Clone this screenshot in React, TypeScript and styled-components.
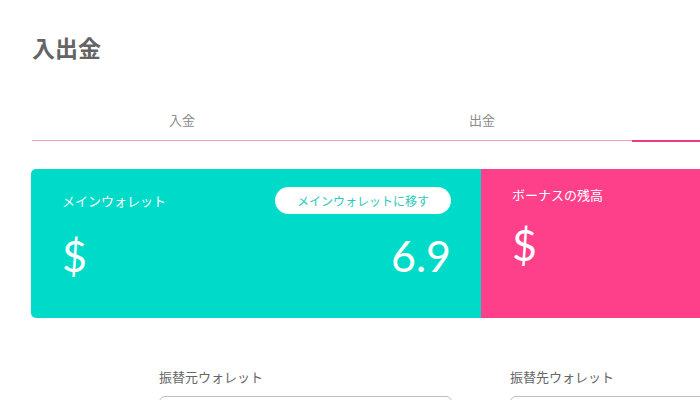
import React from "react";
import styled, { createGlobalStyle } from "styled-components";

const GlobalStyle = createGlobalStyle`
  body {
    margin: 0;
    background: #fff;
    overflow: hidden;
    font-family: "Noto Sans CJK JP", "Noto Sans", sans-serif;
  }
`;

const Page = styled.div`
  width: 900px;
  padding: 31px 0 0 31px;
`;

const Title = styled.h1`
  margin: 0 0 0 1px;
  font-size: 23px;
  line-height: 32px;
  font-weight: 700;
  color: #646464;
`;

const TabBar = styled.div`
  display: flex;
  margin-top: 36px;
  margin-left: 1px;
  border-bottom: 1px solid #f49bc1;
`;

const Tab = styled.div<{ $active?: boolean }>`
  position: relative;
  flex: 0 0 300px;
  height: 18px;
  text-align: center;
  padding: 12px 0 11px;
  font-size: 13px;
  line-height: 18px;
  color: #8a8a8a;

  &::after {
    content: "";
    display: ${(p) => (p.$active ? "block" : "none")};
    position: absolute;
    left: 0;
    right: 0;
    bottom: -2px;
    height: 2px;
    background: #ea3a80;
  }
`;

const Cards = styled.div`
  display: flex;
  margin-top: 28px;
`;

const Card = styled.div<{ $color: string; $first?: boolean }>`
  flex: 0 0 450px;
  box-sizing: border-box;
  height: 149px;
  padding: 18px 30px 0 31px;
  background: ${(p) => p.$color};
  color: #fff;
  border-radius: ${(p) => (p.$first ? "5px 0 0 5px" : "0 5px 5px 0")};
`;

const CardHead = styled.div`
  display: flex;
  justify-content: space-between;
  align-items: center;
`;

const CardLabel = styled.div`
  font-size: 13px;
  line-height: 16px;
`;

const MoveButton = styled.button`
  height: 27px;
  width: 176px;
  border: none;
  border-radius: 14px;
  background: #fff;
  color: #2cc9bb;
  font-family: "Noto Sans CJK JP", sans-serif;
  font-size: 12px;
  padding: 0;
`;

const Amount = styled.div`
  display: flex;
  justify-content: space-between;
  align-items: baseline;
  margin-top: 17px;
  font-family: Lato, "Open Sans", sans-serif;
  font-weight: 400;
  font-size: 43px;
  line-height: 50px;
`;

const Form = styled.div`
  display: grid;
  grid-template-columns: 293px 293px;
  column-gap: 58px;
  margin-top: 50px;
  padding-left: 128px;
`;

const Field = styled.div`
  display: flex;
  flex-direction: column;
`;

const FieldLabel = styled.label`
  font-size: 13px;
  line-height: 18px;
  color: #666;
  margin-bottom: 10px;
`;

const Select = styled.div`
  height: 40px;
  border: 1px solid #bdbdbd;
  border-radius: 6px;
`;

export default function App() {
  return (
    <Page>
      <GlobalStyle />
      <Title>入出金</Title>
      <TabBar>
        <Tab>入金</Tab>
        <Tab>出金</Tab>
        <Tab $active />
      </TabBar>
      <Cards>
        <Card $color="#00dbc9" $first>
          <CardHead>
            <CardLabel>メインウォレット</CardLabel>
            <MoveButton>メインウォレットに移す</MoveButton>
          </CardHead>
          <Amount>
            <span>$</span>
            <span>6.9</span>
          </Amount>
        </Card>
        <Card $color="#fe3f8a">
          <CardHead>
            <CardLabel>ボーナスの残高</CardLabel>
          </CardHead>
          <Amount>
            <span>$</span>
          </Amount>
        </Card>
      </Cards>
      <Form>
        <Field>
          <FieldLabel>振替元ウォレット</FieldLabel>
          <Select />
        </Field>
        <Field>
          <FieldLabel>振替先ウォレット</FieldLabel>
          <Select />
        </Field>
      </Form>
    </Page>
  );
}
